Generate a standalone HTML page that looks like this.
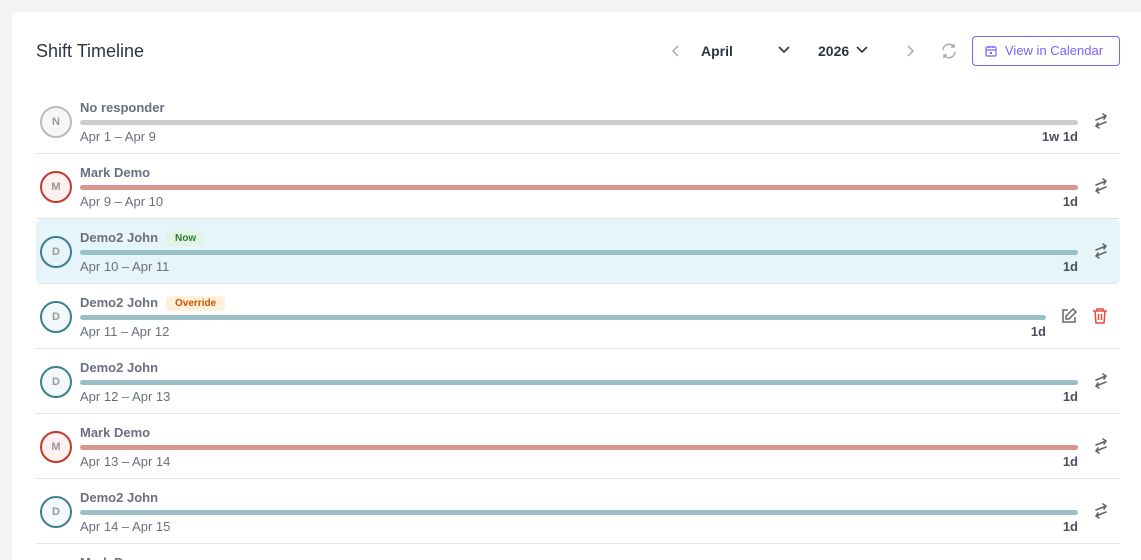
<!DOCTYPE html>
<html style="overflow:hidden;height:560px"><head><style>
*{box-sizing:border-box;margin:0;padding:0}
body{width:1141px;height:560px;overflow:hidden;background:#f3f4f6;font-family:"Liberation Sans",sans-serif;position:relative}
.card{position:absolute;left:12px;top:12px;width:1129px;height:548px;background:#fff;border-radius:8px 0 0 0;overflow:hidden}
.title{position:absolute;left:36px;top:41px;font-size:18px;color:#2f3345}
.row{position:absolute;left:36px;width:1084px;height:65px;border-bottom:1px solid #e5e5e5}
.row.now{background:#e6f5fa;border-radius:6px}
.av{position:absolute;left:4px;top:17px;width:32px;height:32px;border-radius:50%;border:2px solid;font-size:11px;color:#999;text-align:center;line-height:28px;font-weight:bold}
.name{position:absolute;left:44px;top:11px;font-size:13px;font-weight:bold;color:#6b6f80}
.bar{position:absolute;left:44px;top:31px;height:5px;border-radius:3px}
.date{position:absolute;left:44px;top:40px;font-size:13px;color:#6b6f80}
.dur{position:absolute;top:40px;font-size:13px;color:#4a4e5e;font-weight:bold}
.badge{display:inline-block;margin-left:8px;font-size:10px;padding:2px 9px;border-radius:4px;vertical-align:1px}
</style></head><body>
<div class="card"></div>
<div class="title">Shift Timeline</div>
<svg style="position:absolute;left:671px;top:44px" width="10" height="14"><path d="M7 2 L2 7 L7 12" stroke="#aaa" stroke-width="1.5" fill="none"/></svg>
<div style="position:absolute;left:701px;top:43px;font-size:14px;color:#2f3345;font-weight:bold">April</div>
<svg style="position:absolute;left:777px;top:45px" width="14" height="10"><path d="M2 2 L7 7 L12 2" stroke="#333" stroke-width="1.6" fill="none"/></svg>
<div style="position:absolute;left:818px;top:43px;font-size:14px;color:#2f3345;font-weight:bold">2026</div>
<svg style="position:absolute;left:855px;top:45px" width="14" height="10"><path d="M2 2 L7 7 L12 2" stroke="#333" stroke-width="1.6" fill="none"/></svg>
<svg style="position:absolute;left:905px;top:44px" width="10" height="14"><path d="M3 2 L8 7 L3 12" stroke="#aaa" stroke-width="1.5" fill="none"/></svg>
<svg style="position:absolute;left:940px;top:42px" width="18" height="18" viewBox="0 0 18 18"><path d="M3 8 A6 6 0 0 1 14 5 M14 2 V5 H11 M15 10 A6 6 0 0 1 4 13 M4 16 V13 H7" stroke="#aaa" stroke-width="1.5" fill="none"/></svg>
<div style="position:absolute;left:972px;top:36px;width:148px;height:30px;border:1px solid #7b61ff;border-radius:4px;color:#7b61ff;font-size:13px;line-height:28px;padding-left:32px">View in Calendar</div>
<svg style="position:absolute;left:985px;top:45px" width="12" height="12" viewBox="0 0 12 12"><rect x="1" y="2" width="10" height="9" rx="1" stroke="#7b61ff" fill="none" stroke-width="1.2"/><path d="M1 5H11M4 1V3M8 1V3" stroke="#7b61ff" stroke-width="1.2"/><rect x="5" y="7" width="2" height="2" fill="#7b61ff"/></svg>

<div class="row" style="top:89px"><div class="av" style="border-color:#bbb;background:#f7f7f7">N</div><div class="name">No responder</div><div class="bar" style="width:998px;background:#ccc"></div><div class="date">Apr 1 – Apr 9</div><div class="dur" style="right:42px">1w 1d</div></div>
<div class="row" style="top:154px"><div class="av" style="border-color:#c0392b;background:#fcf0f0">M</div><div class="name">Mark Demo</div><div class="bar" style="width:998px;background:#d9958f"></div><div class="date">Apr 9 – Apr 10</div><div class="dur" style="right:42px">1d</div></div>
<div class="row now" style="top:219px"><div class="av" style="border-color:#3d7f8c;background:#e6f5fa">D</div><div class="name">Demo2 John<span class="badge" style="background:#e3f4e6;color:#2e7d32">Now</span></div><div class="bar" style="width:998px;background:#9abfc6"></div><div class="date">Apr 10 – Apr 11</div><div class="dur" style="right:42px">1d</div></div>
<div class="row" style="top:284px"><div class="av" style="border-color:#3d7f8c;background:#f3f9fb">D</div><div class="name">Demo2 John<span class="badge" style="background:#fdf1dc;color:#d35400">Override</span></div><div class="bar" style="width:966px;background:#9abfc6"></div><div class="date">Apr 11 – Apr 12</div><div class="dur" style="right:74px">1d</div>
<svg style="position:absolute;left:1024px;top:23px" width="18" height="18" viewBox="0 0 18 18"><path d="M8 3H3V15H15V10" stroke="#666" stroke-width="1.5" fill="none"/><path d="M13 2L16 5L9 12H6V9Z" stroke="#666" stroke-width="1.5" fill="none"/></svg>
<svg style="position:absolute;left:1055px;top:23px" width="18" height="18" viewBox="0 0 18 18"><path d="M2 4H16M6 4V2H12V4M4 4L5 16H13L14 4M7.5 7V13M10.5 7V13" stroke="#e74c3c" stroke-width="1.5" fill="none"/></svg></div>
<div class="row" style="top:349px"><div class="av" style="border-color:#3d7f8c;background:#f3f9fb">D</div><div class="name">Demo2 John</div><div class="bar" style="width:998px;background:#9abfc6"></div><div class="date">Apr 12 – Apr 13</div><div class="dur" style="right:42px">1d</div></div>
<div class="row" style="top:414px"><div class="av" style="border-color:#c0392b;background:#fcf0f0">M</div><div class="name">Mark Demo</div><div class="bar" style="width:998px;background:#d9958f"></div><div class="date">Apr 13 – Apr 14</div><div class="dur" style="right:42px">1d</div></div>
<div class="row" style="top:479px"><div class="av" style="border-color:#3d7f8c;background:#f3f9fb">D</div><div class="name">Demo2 John</div><div class="bar" style="width:998px;background:#9abfc6"></div><div class="date">Apr 14 – Apr 15</div><div class="dur" style="right:42px">1d</div></div>
<div class="row" style="top:544px;height:16px;border:none;overflow:hidden"><div class="name">Mark Demo</div></div>

<svg width="0" height="0" style="position:absolute"><defs><g id="sw"><path d="M5 9L15 5M12 3L15 5L13 8M15 11L5 15M7 12L5 15L8 17" stroke="#666" stroke-width="1.6" fill="none" stroke-linecap="round" stroke-linejoin="round"/></g></defs></svg>
<svg style="position:absolute;left:1091px;top:111px" width="20" height="20"><use href="#sw"/></svg>
<svg style="position:absolute;left:1091px;top:176px" width="20" height="20"><use href="#sw"/></svg>
<svg style="position:absolute;left:1091px;top:241px" width="20" height="20"><use href="#sw"/></svg>
<svg style="position:absolute;left:1091px;top:371px" width="20" height="20"><use href="#sw"/></svg>
<svg style="position:absolute;left:1091px;top:436px" width="20" height="20"><use href="#sw"/></svg>
<svg style="position:absolute;left:1091px;top:501px" width="20" height="20"><use href="#sw"/></svg>
</body></html>
